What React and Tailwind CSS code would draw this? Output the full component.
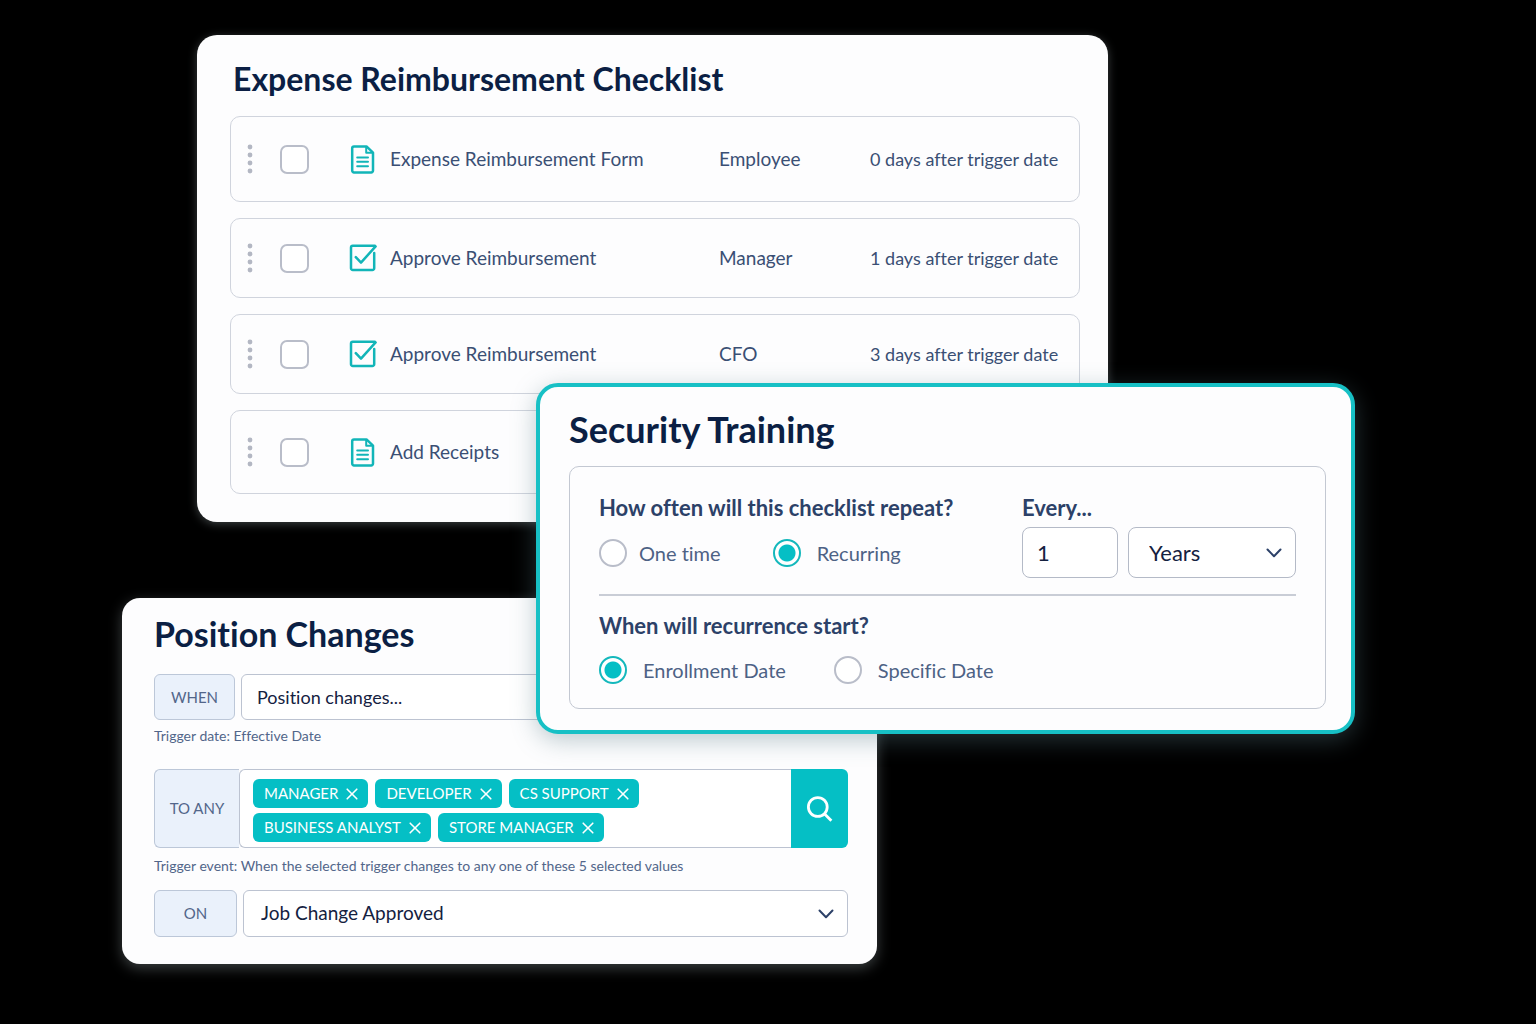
import { useState } from 'react'

const tasks = [
    { id: 1, icon: 'form', name: 'Expense Reimbursement Form', role: 'Employee', due: '0 days after trigger date', height: 'h-[86px]' },
    { id: 2, icon: 'approve', name: 'Approve Reimbursement', role: 'Manager', due: '1 days after trigger date', height: 'h-20' },
    { id: 3, icon: 'approve', name: 'Approve Reimbursement', role: 'CFO', due: '3 days after trigger date', height: 'h-20' },
    { id: 4, icon: 'form', name: 'Add Receipts', role: '', due: '', height: 'h-[84px]' },
];

const FormIcon = () => (
    <svg width="28" height="30" viewBox="0 0 28 30" fill="none" stroke="#12b5b8" strokeWidth="2.5" strokeLinejoin="round" aria-hidden="true">
        <path d="M17.5 2.4H5A1.8 1.8 0 0 0 3.2 4.2V26.6A1.8 1.8 0 0 0 5 28.4H22.2A1.8 1.8 0 0 0 24 26.6V8.6L17.5 2.4Z" />
        <path d="M17.2 2.8V8.8H23.6" strokeWidth="2" />
        <path d="M8.2 13.4H19M8.2 17.8H19M8.2 22.2H19" strokeLinecap="round" strokeWidth="2" />
    </svg>
);

const ApproveIcon = () => (
    <svg width="28" height="30" viewBox="0 0 28 30" fill="none" stroke="#12b5b8" strokeWidth="2.5" strokeLinejoin="round" strokeLinecap="round" aria-hidden="true">
        <path d="M25.2 10V25.2A1.8 1.8 0 0 1 23.4 27H3.8A1.8 1.8 0 0 1 2 25.2V4.6A1.8 1.8 0 0 1 3.8 2.8H25.8" />
        <path d="M6.8 14.2L12 19.6L26.6 3.4" />
    </svg>
);

const DragHandle = () => (
    <svg width="6" height="30" viewBox="0 0 6 30" fill="#b3b7c3" aria-hidden="true">
        <circle cx="3" cy="3" r="2.4" />
        <circle cx="3" cy="11" r="2.4" />
        <circle cx="3" cy="19" r="2.4" />
        <circle cx="3" cy="27" r="2.4" />
    </svg>
);

const Chevron = () => (
    <svg className="absolute right-3.5 top-1/2 -translate-y-1/2 pointer-events-none" width="16" height="16" viewBox="0 0 16 16" fill="none" stroke="#2c4168" strokeWidth="2" strokeLinecap="round" strokeLinejoin="round" aria-hidden="true">
        <path d="M1.5 4.5L8 11.2L14.5 4.5" />
    </svg>
);

const ChecklistCard = () => (
    <section className="col-start-2 col-span-3 row-start-1 bg-[#fdfdfe] rounded-[20px] pl-[33px] pr-7 pt-6 pb-7 shadow-[0_2px_10px_rgba(200,215,220,0.3)]">
        <h2 className="pl-[3px] text-[32px] leading-10 font-bold text-[#0b1f44]">Expense Reimbursement Checklist</h2>
        <ul className="mt-[17px] flex flex-col gap-4">
            {tasks.map((task) => (
                <li key={task.id} className={`${task.height} grid grid-cols-[33px_69px_41px_1fr_151px_187px] items-center pl-4 pr-[22px] border border-[#d0d4dd] rounded-[10px] text-[19px] leading-6 text-[#3a4f74]`}>
                    <DragHandle />
                    <input type="checkbox" aria-label={task.name} className="appearance-none size-[29px] border-2 border-[#b9bdc9] rounded-[7px] bg-white checked:bg-[#05bfc5]" />
                    {task.icon === 'form' ? <FormIcon /> : <ApproveIcon />}
                    <span className="whitespace-nowrap">{task.name}</span>
                    <span>{task.role}</span>
                    <span className="whitespace-nowrap text-right text-lg">{task.due}</span>
                </li>
            ))}
        </ul>
    </section>
);

const RadioOption = ({ name, label, checked, onChange, gap = 'gap-4' }) => (
    <label className={`flex items-center ${gap} text-xl leading-7 text-[#4d6285]`}>
        <input
            type="radio"
            name={name}
            checked={checked}
            onChange={onChange}
            className="appearance-none size-7 rounded-full border-2 border-[#b9bdc9] bg-white checked:border-[#14b8bc] checked:bg-[radial-gradient(circle,#05bfc5_8px,#ffffff_9px)]"
        />
        {label}
    </label>
);

const TrainingCard = () => {
    const [repeat, setRepeat] = useState('recurring');
    const [start, setStart] = useState('enrollment');

    return (
        <section className="relative z-10 col-start-3 col-span-3 row-start-2 -mt-[139px] bg-[#fdfdfe] border-4 border-[#17c0c5] rounded-[22px] pl-[29px] pr-[25px] pt-5 pb-[21px] shadow-[0_6px_24px_rgba(90,125,135,0.4)]">
            <h2 className="text-[36px] leading-11 font-bold text-[#0b1f44]">Security Training</h2>
            <div className="mt-[15px] border border-[#c3c8d2] rounded-[10px] px-[29px] pt-[27px] pb-6">
                <div className="flex justify-between pb-4 border-b-2 border-[#c9cdd6]">
                    <fieldset>
                        <legend className="text-[22px] leading-7 font-bold text-[#2c4168]">How often will this checklist repeat?</legend>
                        <div className="mt-[17px] flex gap-13">
                            <RadioOption name="repeat" label="One time" gap="gap-3" checked={repeat === 'once'} onChange={() => setRepeat('once')} />
                            <RadioOption name="repeat" label="Recurring" checked={repeat === 'recurring'} onChange={() => setRepeat('recurring')} />
                        </div>
                    </fieldset>
                    <div>
                        <label htmlFor="every" className="block text-[22px] leading-7 font-bold text-[#2c4168]">Every...</label>
                        <div className="mt-[5px] flex gap-2.5 text-[22px] text-[#14213f]">
                            <input id="every" type="text" defaultValue="1" className="w-24 h-[51px] px-3.5 border border-[#b4bac7] rounded-lg bg-white" />
                            <div className="relative">
                                <select aria-label="Repeat unit" defaultValue="Years" className="appearance-none w-[168px] h-[51px] px-5 border border-[#b4bac7] rounded-lg bg-white">
                                    <option>Years</option>
                                    <option>Months</option>
                                    <option>Days</option>
                                </select>
                                <Chevron />
                            </div>
                        </div>
                    </div>
                </div>
                <fieldset className="mt-4">
                    <legend className="text-[22px] leading-7 font-bold text-[#2c4168]">When will recurrence start?</legend>
                    <div className="mt-4 flex gap-12">
                        <RadioOption name="start" label="Enrollment Date" checked={start === 'enrollment'} onChange={() => setStart('enrollment')} />
                        <RadioOption name="start" label="Specific Date" checked={start === 'specific'} onChange={() => setStart('specific')} />
                    </div>
                </fieldset>
            </div>
        </section>
    );
};

const PositionCard = () => {
    const [positions, setPositions] = useState(['MANAGER', 'DEVELOPER', 'CS SUPPORT', 'BUSINESS ANALYST', 'STORE MANAGER']);

    const removePosition = (position) => {
        setPositions((prev) => prev.filter((item) => item !== position));
    };

    return (
        <section className="col-start-1 col-span-3 row-start-3 -mt-[136px] ml-[122px] bg-[#fdfdfe] rounded-[18px] pl-8 pr-[29px] pt-3.5 pb-[27px] shadow-[0_4px_14px_rgba(200,215,220,0.3)]">
            <h2 className="text-[34px] leading-11 font-bold text-[#0b1f44]">Position Changes</h2>

            <div className="mt-[18px] flex gap-1.5">
                <label htmlFor="when" className="w-[81px] h-[46px] flex items-center justify-center bg-[#eaf1fb] border border-[#bcc7d8] rounded-md text-[15px] text-[#52668a]">WHEN</label>
                <input id="when" type="text" defaultValue="Position changes..." className="flex-1 min-w-0 h-[46px] px-[15px] border border-[#bcc3d1] rounded-md bg-white text-lg text-[#14213f]" />
            </div>
            <p className="mt-1.5 text-sm leading-5 text-[#52668a]">Trigger date: Effective Date</p>

            <div className="mt-[23px] flex">
                <div className="w-[85px] flex items-center justify-center bg-[#eaf1fb] border border-r-0 border-[#bcc7d8] rounded-l-md text-[15px] text-[#52668a]">TO ANY</div>
                <div className="flex-1 pl-[13px] pt-[9px] pb-[5px] bg-white border border-r-0 border-[#bcc3d1] rounded-l-md">
                    <ul className="max-w-100 flex flex-wrap gap-x-[7px] gap-y-[5px]">
                        {positions.map((position) => (
                            <li key={position} className="h-[29px] flex items-center gap-2 pl-[11px] pr-2.5 bg-[#05bfc5] rounded-md text-[15px] text-white whitespace-nowrap">
                                {position}
                                <button type="button" aria-label={`Remove ${position}`} onClick={() => removePosition(position)}>
                                    <svg width="12" height="12" viewBox="0 0 12 12" fill="none" stroke="currentColor" strokeWidth="1.6" strokeLinecap="round">
                                        <path d="M1.2 1.2L10.8 10.8M10.8 1.2L1.2 10.8" />
                                    </svg>
                                </button>
                            </li>
                        ))}
                    </ul>
                </div>
                <button type="button" aria-label="Search positions" className="w-[57px] flex items-center justify-center bg-[#05bfc5] rounded-r-md">
                    <svg width="28" height="28" viewBox="0 0 28 28" fill="none" stroke="#ffffff" strokeWidth="2.8">
                        <circle cx="11.8" cy="12" r="9.4" />
                        <path d="M18.4 18.8L25.4 25.8" />
                    </svg>
                </button>
            </div>
            <p className="mt-2 text-sm leading-5 text-[#52668a]">Trigger event: When the selected trigger changes to any one of these 5 selected values</p>

            <div className="mt-3.5 flex gap-1.5">
                <label htmlFor="on" className="w-[83px] h-[47px] flex items-center justify-center bg-[#eaf1fb] border border-[#bcc7d8] rounded-md text-[15px] text-[#52668a]">ON</label>
                <div className="relative flex-1">
                    <select id="on" defaultValue="Job Change Approved" className="appearance-none w-full h-[47px] px-[17px] border border-[#bcc3d1] rounded-md bg-white text-[19px] text-[#14213f]">
                        <option>Job Change Approved</option>
                        <option>Job Change Requested</option>
                    </select>
                    <Chevron />
                </div>
            </div>
        </section>
    );
};

const App = () => {
    return (
        <main className="min-h-screen bg-black pt-[35px] pb-[60px] font-['Lato',sans-serif] [font-variant-ligatures:no-common-ligatures]">
            <div className="grid grid-cols-[197fr_339fr_341fr_231fr_247fr_181fr]">
                <ChecklistCard />
                <TrainingCard />
                <PositionCard />
            </div>
        </main>
    )
}

export default App
